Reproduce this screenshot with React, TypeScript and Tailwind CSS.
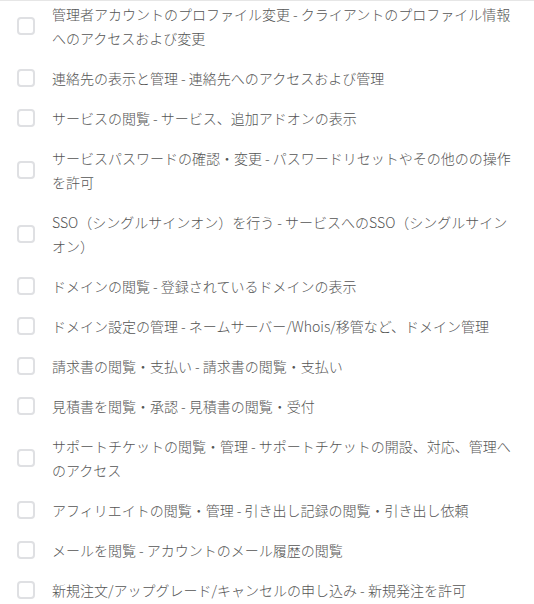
const permissions = [
  "管理者アカウントのプロファイル変更 - クライアントのプロファイル情報へのアクセスおよび変更",
  "連絡先の表示と管理 - 連絡先へのアクセスおよび管理",
  "サービスの閲覧 - サービス、追加アドオンの表示",
  "サービスパスワードの確認・変更 - パスワードリセットやその他のの操作を許可",
  "SSO（シングルサインオン）を行う - サービスへのSSO（シングルサインオン）",
  "ドメインの閲覧 - 登録されているドメインの表示",
  "ドメイン設定の管理 - ネームサーバー/Whois/移管など、ドメイン管理",
  "請求書の閲覧・支払い - 請求書の閲覧・支払い",
  "見積書を閲覧・承認 - 見積書の閲覧・受付",
  "サポートチケットの閲覧・管理 - サポートチケットの開設、対応、管理へのアクセス",
  "アフィリエイトの閲覧・管理 - 引き出し記録の閲覧・引き出し依頼",
  "メールを閲覧 - アカウントのメール履歴の閲覧",
  "新規注文/アップグレード/キャンセルの申し込み - 新規発注を許可",
];

export default function App() {
  return (
    <div
      className="w-[534px] h-[604px] overflow-hidden bg-white border-t border-[#e6e6e6] pt-px"
      style={{ fontFamily: '"Noto Sans CJK JP", "Noto Sans", sans-serif' }}
    >
      {permissions.map((p, i) => (
        <label
          key={i}
          className={`flex items-center pl-[17px] pr-[18px] ${i === 0 ? "pb-2" : "py-2"}`}
        >
          <span className="w-[18px] h-[18px] shrink-0 rounded-[4px] border-2 border-[#dfe0e3] bg-white" />
          <span className="ml-[17px] text-[14px] leading-[24px] font-light text-[#555555]">{p}</span>
        </label>
      ))}
    </div>
  );
}
